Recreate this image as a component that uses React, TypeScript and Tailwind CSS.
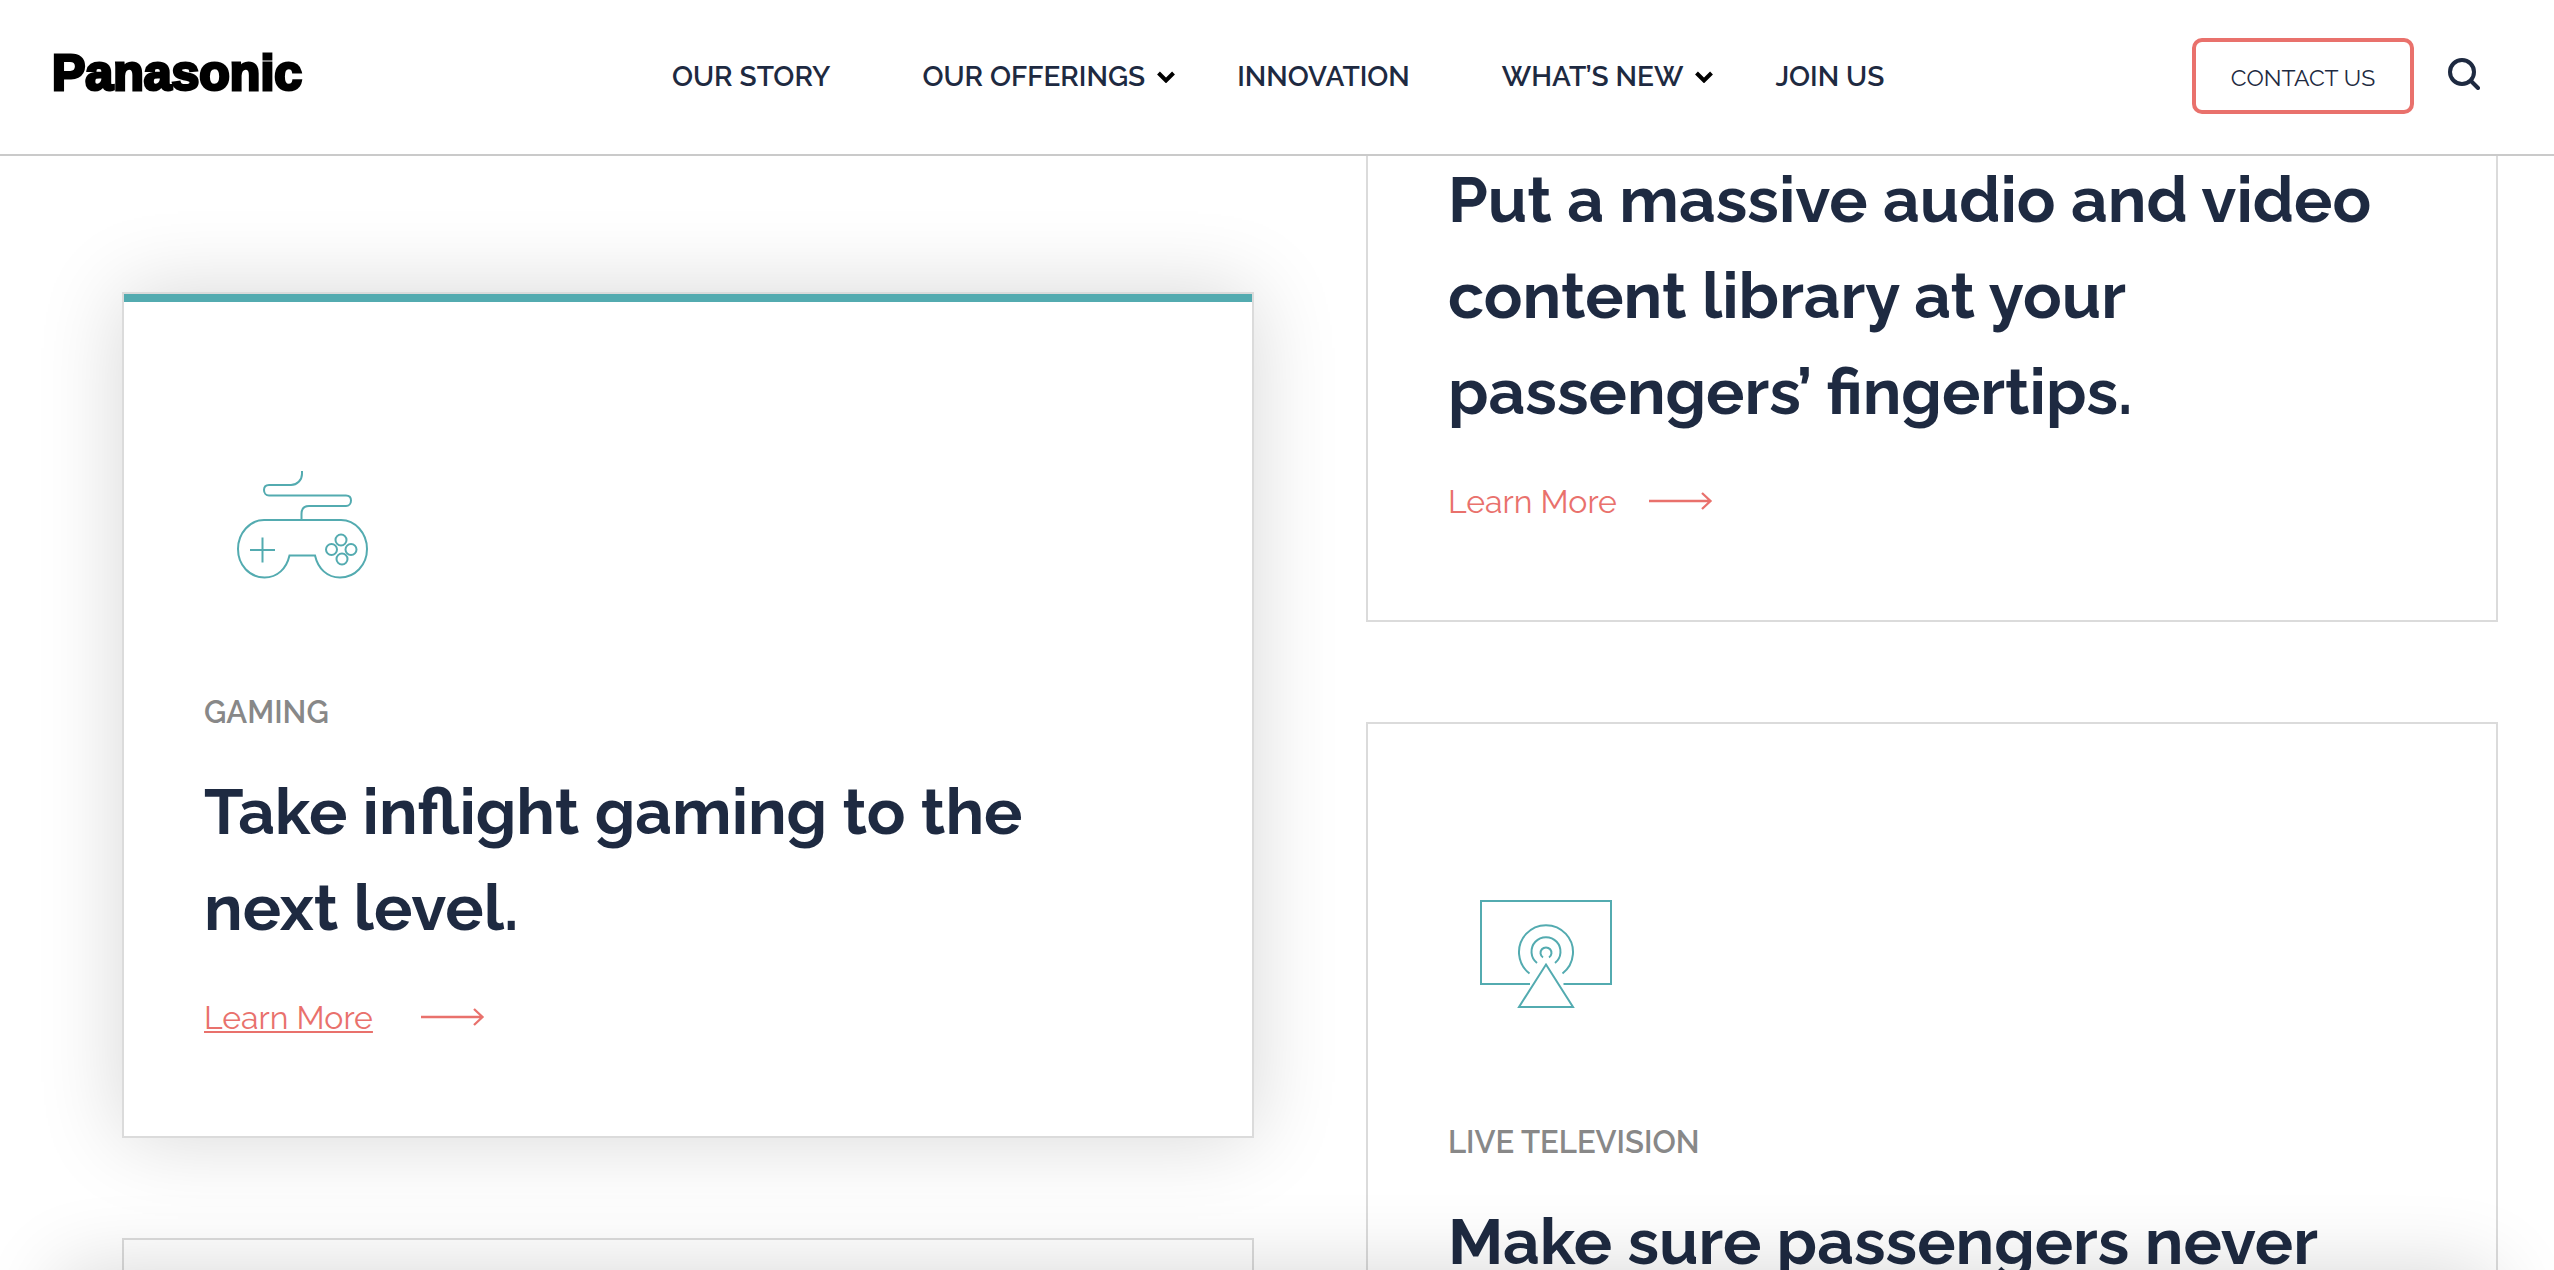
import type { ReactNode } from "react";

const navItems = [
  { label: "OUR STORY" },
  { label: "OUR OFFERINGS", menu: true },
  { label: "INNOVATION" },
  { label: "WHAT’S NEW", menu: true },
  { label: "JOIN US" },
];

function Caret() {
  return (
    <svg className="h-[12px] w-[18px]" viewBox="0 0 18 12" fill="none" aria-hidden="true">
      <path d="M1.500 2l7.500 7.500L16.500 2" stroke="#000" strokeWidth="4" />
    </svg>
  );
}

function Header() {
  return (
    <header className="relative z-20 flex h-[156px] shrink-0 items-center border-b-2 border-[#cacaca] bg-white pr-[74px] pl-[52px]">
      <a
        href="#home"
        className="mb-[8px] w-[250px] font-['Liberation_Sans',Arial,sans-serif] text-[50px] leading-[56px] font-bold text-black [-webkit-text-stroke:3px_#000]"
      >
        Panasonic
      </a>
      <nav className="ml-[370px] flex gap-[62px] text-[28px] leading-[42px] font-semibold whitespace-nowrap">
        {navItems.map((item) => (
          <a key={item.label} href="#nav" className="flex items-center">
            {item.label}
            <span className="flex w-[30px] justify-end">{item.menu && <Caret />}</span>
          </a>
        ))}
      </nav>
      <a
        href="#contact"
        className="mb-[2px] ml-auto flex h-[76px] w-[222px] items-center justify-center rounded-[10px] border-4 border-[#e9716c] pt-[4px] text-[23px] leading-[32px] whitespace-nowrap"
      >
        CONTACT US
      </a>
      <button type="button" aria-label="Search" className="mb-[6px] ml-[34px] size-[32px]">
        <svg viewBox="0 0 32 32" fill="none" stroke="#1e2a41" strokeWidth="4" strokeLinecap="round">
          <circle cx="14" cy="14" r="12" />
          <path d="M23 23l7 7" />
        </svg>
      </button>
    </header>
  );
}

function GamepadIcon() {
  return (
    <svg
      className="h-[170px] w-[196px]"
      viewBox="4 0 196 170"
      fill="none"
      stroke="#53abb0"
      strokeWidth="2"
      aria-hidden="true"
    >
      <path d="M102 31v3c0 6-5 11-11 11H69c-3 0-5 2-5 5s2 5.500 5 5.500h77c3 0 5 2 5 5s-2 5.500-5 5.500h-37c-5 0-7.500 3-7.500 8v6" />
      <path d="M64 80h77c14 0 26 13 26 29s-12 28.500-27 28.500c-13 0-22-9-25-22H89.500c-3 13-12 22-25 22C49.500 137.500 38 125 38 109s12-29 26-29z" />
      <path d="M50 110h25M62.500 97.500v25" />
      <circle cx="141" cy="100" r="5.500" />
      <circle cx="131.500" cy="109.500" r="5.500" />
      <circle cx="151" cy="109.500" r="5.500" />
      <circle cx="142" cy="119" r="5.500" />
    </svg>
  );
}

function BroadcastIcon() {
  return (
    <svg
      className="h-[170px] w-[196px]"
      viewBox="-2 0 196 170"
      fill="none"
      stroke="#53abb0"
      strokeWidth="2"
      aria-hidden="true"
    >
      <path d="M80 114H31V31h130v83h-47.500" />
      <path d="M96 94.500L123 137H69z" />
      <path d="M79.500 103.500A27 27 0 1 1 112.500 103.500" />
      <path d="M87 93A14.500 14.500 0 1 1 105 93" />
      <path d="M93 87.500A5.500 5.500 0 1 1 99 87.500" />
    </svg>
  );
}

function Arrow() {
  return (
    <svg className="h-[20px] w-[64px]" viewBox="0 0 64 20" fill="none" stroke="#e9716c" strokeWidth="2.300" aria-hidden="true">
      <path d="M0 9h62M53 1l8.500 8-8.500 8" />
    </svg>
  );
}

type CardProps = {
  icon?: ReactNode;
  label?: string;
  title?: string;
  active?: boolean;
};

function Card({ icon, label, title, active }: CardProps) {
  return (
    <article
      className={
        active
          ? "relative border-2 border-[#dbdbdb] bg-white px-[80px] pt-[146px] pb-[94px] shadow-[0_0_80px_rgba(0,0,0,0.16)]"
          : "relative border-2 border-[#dbdbdb] bg-white px-[80px] pt-[146px] pb-[94px]"
      }
    >
      {active && <div className="absolute inset-x-0 top-0 h-[8px] bg-[#53abb0]" />}
      <div className="h-[170px]">{icon}</div>
      {label && <p className="mt-[78px] text-[31px] leading-[48px] font-semibold text-[#888]">{label}</p>}
      {title && (
        <>
          <h2 className="mt-[28px] pr-[32px] text-[64px] leading-[96px] font-bold">{title}</h2>
          <a href="#more" className="mt-[38px] flex items-center text-[32px] leading-[48px] text-[#e9716c]">
            <span className={active ? "mr-[48px] underline decoration-2 underline-offset-2" : "mr-[32px]"}>
              Learn More
            </span>
            <Arrow />
          </a>
        </>
      )}
    </article>
  );
}

export default function App() {
  return (
    <div className="flex h-screen flex-col overflow-hidden bg-white font-[Raleway,'Open_Sans',sans-serif] text-[#1e2a41]">
      <Header />
      <main className="grid min-h-0 flex-1 grid-cols-2 gap-x-[112px] pr-[56px] pl-[122px]">
        <div className="flex flex-col gap-[100px] pt-[136px]">
          <Card active icon={<GamepadIcon />} label="GAMING" title="Take inflight gaming to the next level." />
          <Card />
        </div>
        <div className="flex flex-col gap-[100px]">
          <div className="flex h-[466px] shrink-0 flex-col justify-end overflow-hidden">
            <Card title="Put a massive audio and video content library at your passengers’ fingertips." />
          </div>
          <Card icon={<BroadcastIcon />} label="LIVE TELEVISION" title="Make sure passengers never miss a moment." />
        </div>
      </main>
      <div className="fixed inset-x-[60px] top-full z-30 h-[200px] shadow-[0_0_80px_rgba(0,0,0,0.16)]" />
    </div>
  );
}
